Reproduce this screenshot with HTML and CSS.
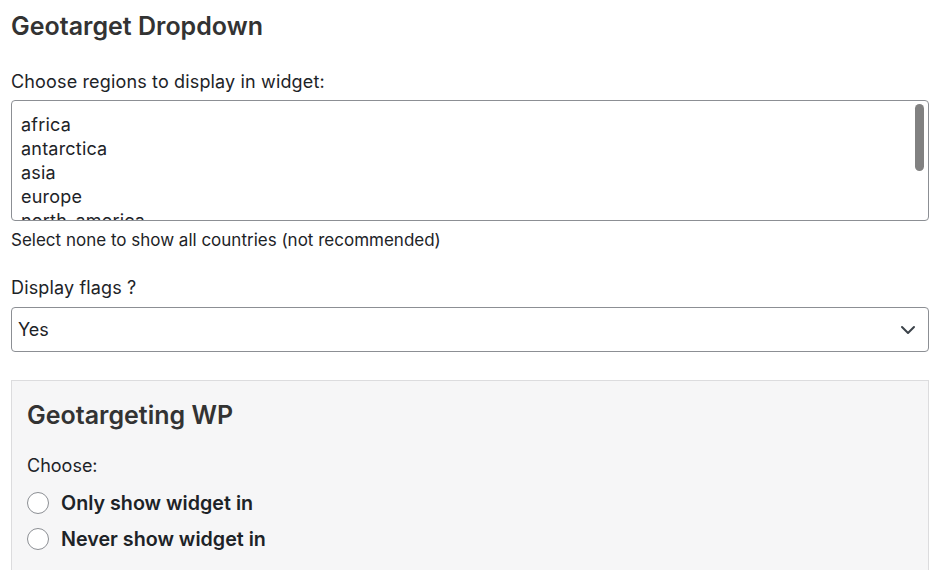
FILE: index.html
```html
<!DOCTYPE html>
<html>
<head>
<meta charset="utf-8">
<link rel="stylesheet" href="styles.css">
</head>
<body>
<div class="page">
  <h2 class="title">Geotarget Dropdown</h2>
  <label class="label">Choose regions to display in widget:</label>
  <div class="listbox">
    <div class="opts">
      <div class="opt">africa</div>
      <div class="opt">antarctica</div>
      <div class="opt">asia</div>
      <div class="opt">europe</div>
      <div class="opt">north_america</div>
    </div>
    <span class="thumb"></span>
  </div>
  <p class="help">Select none to show all countries (not recommended)</p>
  <label class="label flags">Display flags ?</label>
  <div class="select">
    <span>Yes</span>
    <svg class="chev" width="16" height="10" viewBox="0 0 16 10"><path d="M2 2 L8 8 L14 2" fill="none" stroke="#3c434a" stroke-width="2" stroke-linecap="round" stroke-linejoin="round"/></svg>
  </div>
  <div class="panel">
    <h2 class="ptitle">Geotargeting WP</h2>
    <p class="choose">Choose:</p>
    <div class="radio first"><span class="circle"></span><span class="rlabel">Only show widget in</span></div>
    <div class="radio"><span class="circle"></span><span class="rlabel">Never show widget in</span></div>
  </div>
</div>
</body>
</html>
```
FILE: styles.css
```css
html, body {
  margin: 0;
  padding: 0;
  background: #ffffff;
  font-family: Inter, "Liberation Sans", Arial, sans-serif;
  color: #1d2327;
}
.page {
  padding: 0 12px 0 11px;
  overflow: hidden;
  height: 570px;
}
.title {
  margin: 11px 0 0;
  font-size: 25px;
  font-weight: 600;
  color: #333333;
  line-height: 30px;
}
.label {
  display: block;
  margin-top: 30px;
  font-size: 18px;
  letter-spacing: 0.15px;
  line-height: 22px;
}
.listbox {
  position: relative;
  margin-top: 7px;
  height: 121px;
  box-sizing: border-box;
  border: 1px solid #8c8f94;
  border-radius: 4px;
  overflow: hidden;
}
.opts {
  padding: 12px 9px 0 9px;
}
.thumb {
  position: absolute;
  right: 4px;
  top: 3px;
  width: 9px;
  height: 67px;
  border-radius: 5px;
  background: #818181;
}
.opt {
  font-size: 18px;
  letter-spacing: 0.2px;
  line-height: 24px;
  height: 24px;
}
.help {
  margin: 8px 0 0;
  font-size: 17px;
  line-height: 22px;
}
.flags {
  margin-top: 26px;
}
.select {
  margin-top: 8px;
  height: 45px;
  box-sizing: border-box;
  border: 1px solid #8c8f94;
  border-radius: 4px;
  display: flex;
  align-items: center;
  justify-content: space-between;
  padding: 0 12px 0 6px;
  font-size: 18px;
}
.chev {
  display: block;
}
.panel {
  margin-top: 28px;
  background: #f6f6f7;
  border: 1px solid #dcdcde;
  padding: 16px 15px 20px 15px;
  height: 250px;
}
.ptitle {
  margin: 3px 0 0;
  font-size: 25px;
  font-weight: 600;
  color: #333333;
  line-height: 30px;
}
.choose {
  margin: 25px 0 0;
  font-size: 18px;
  line-height: 22px;
}
.radio {
  display: flex;
  align-items: center;
  height: 36px;
}
.radio.first {
  margin-top: 8px;
}
.circle {
  width: 22px;
  height: 22px;
  box-sizing: border-box;
  border: 1px solid #8c8f94;
  border-radius: 50%;
  background: #ffffff;
  margin-right: 12px;
}
.rlabel {
  font-size: 19.7px;
  font-weight: 600;
}
```
